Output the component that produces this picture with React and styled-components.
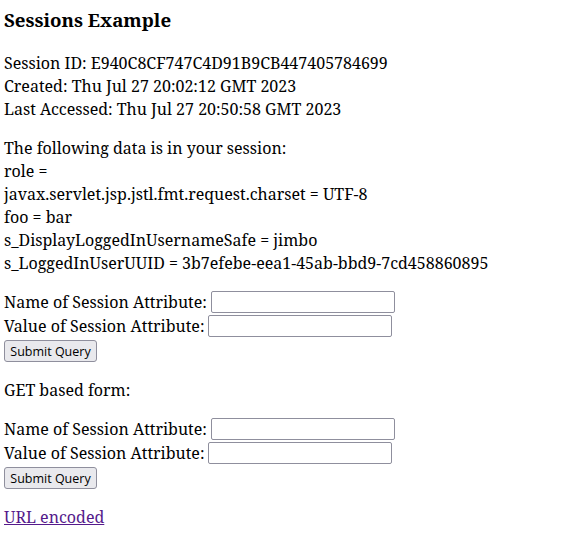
import React from "react";
import styled, { createGlobalStyle } from "styled-components";

const Global = createGlobalStyle`
  html, body { background: #fff; }
  body {
    margin: 0;
    padding: 4px;
    font-family: "Noto Serif", "DejaVu Serif", serif;
    font-size: 16px;
    line-height: 23px;
    color: #000;
  }
`;

const Page = styled.div`
  display: flex;
  flex-direction: column;
`;

const Heading = styled.h3`
  margin: 4px 0 20px;
  font-size: 18.7px;
  font-weight: 700;
  line-height: 24px;
`;

const Block = styled.div`
  display: flex;
  flex-direction: column;
  margin-bottom: ${(p) => p.$gap || 16}px;
`;

const Line = styled.div`
  white-space: nowrap;
`;

const Form = styled.form`
  display: flex;
  flex-direction: column;
  align-items: flex-start;
  margin-bottom: ${(p) => p.$gap || 17}px;
`;

const Field = styled.label`
  display: flex;
  align-items: center;
  gap: 4px;
  height: 24px;
`;

const Input = styled.input`
  width: 184px;
  height: 22px;
  box-sizing: border-box;
  border: 1px solid #8f8f9d;
  border-radius: 2px;
  padding: 1px 2px;
  font: 13px "Open Sans", "Noto Sans", sans-serif;
  background: #fff;
`;

const Button = styled.button`
  margin-top: 2px;
  width: 93px;
  height: 22px;
  box-sizing: border-box;
  padding: 0;
  border: 1px solid #8f8f9d;
  border-radius: 3px;
  background: #e9e9ed;
  font: 12.5px "Open Sans", "Noto Sans", sans-serif;
  color: #000;
`;

const Link = styled.a`
  color: #551a8b;
  text-decoration: underline;
`;

function SessionForm() {
  return (
    <Form onSubmit={(e) => e.preventDefault()}>
      <Field>
        Name of Session Attribute:
        <Input type="text" />
      </Field>
      <Field>
        Value of Session Attribute:
        <Input type="text" />
      </Field>
      <Button type="submit">Submit Query</Button>
    </Form>
  );
}

export default function App() {
  return (
    <Page>
      <Global />
      <Heading>Sessions Example</Heading>
      <Block>
        <Line>Session ID: E940C8CF747C4D91B9CB447405784699</Line>
        <Line>Created: Thu Jul 27 20:02:12 GMT 2023</Line>
        <Line>Last Accessed: Thu Jul 27 20:50:58 GMT 2023</Line>
      </Block>
      <Block $gap={15}>
        <Line>The following data is in your session:</Line>
        <Line>role = </Line>
        <Line>javax.servlet.jsp.jstl.fmt.request.charset = UTF-8</Line>
        <Line>foo = bar</Line>
        <Line>s_DisplayLoggedInUsernameSafe = jimbo</Line>
        <Line>s_LoggedInUserUUID = 3b7efebe-eea1-45ab-bbd9-7cd458860895</Line>
      </Block>
      <SessionForm />
      <Block $gap={15}>
        <Line>GET based form:</Line>
      </Block>
      <SessionForm />
      <Line>
        <Link href="#">URL encoded</Link>
      </Line>
    </Page>
  );
}
